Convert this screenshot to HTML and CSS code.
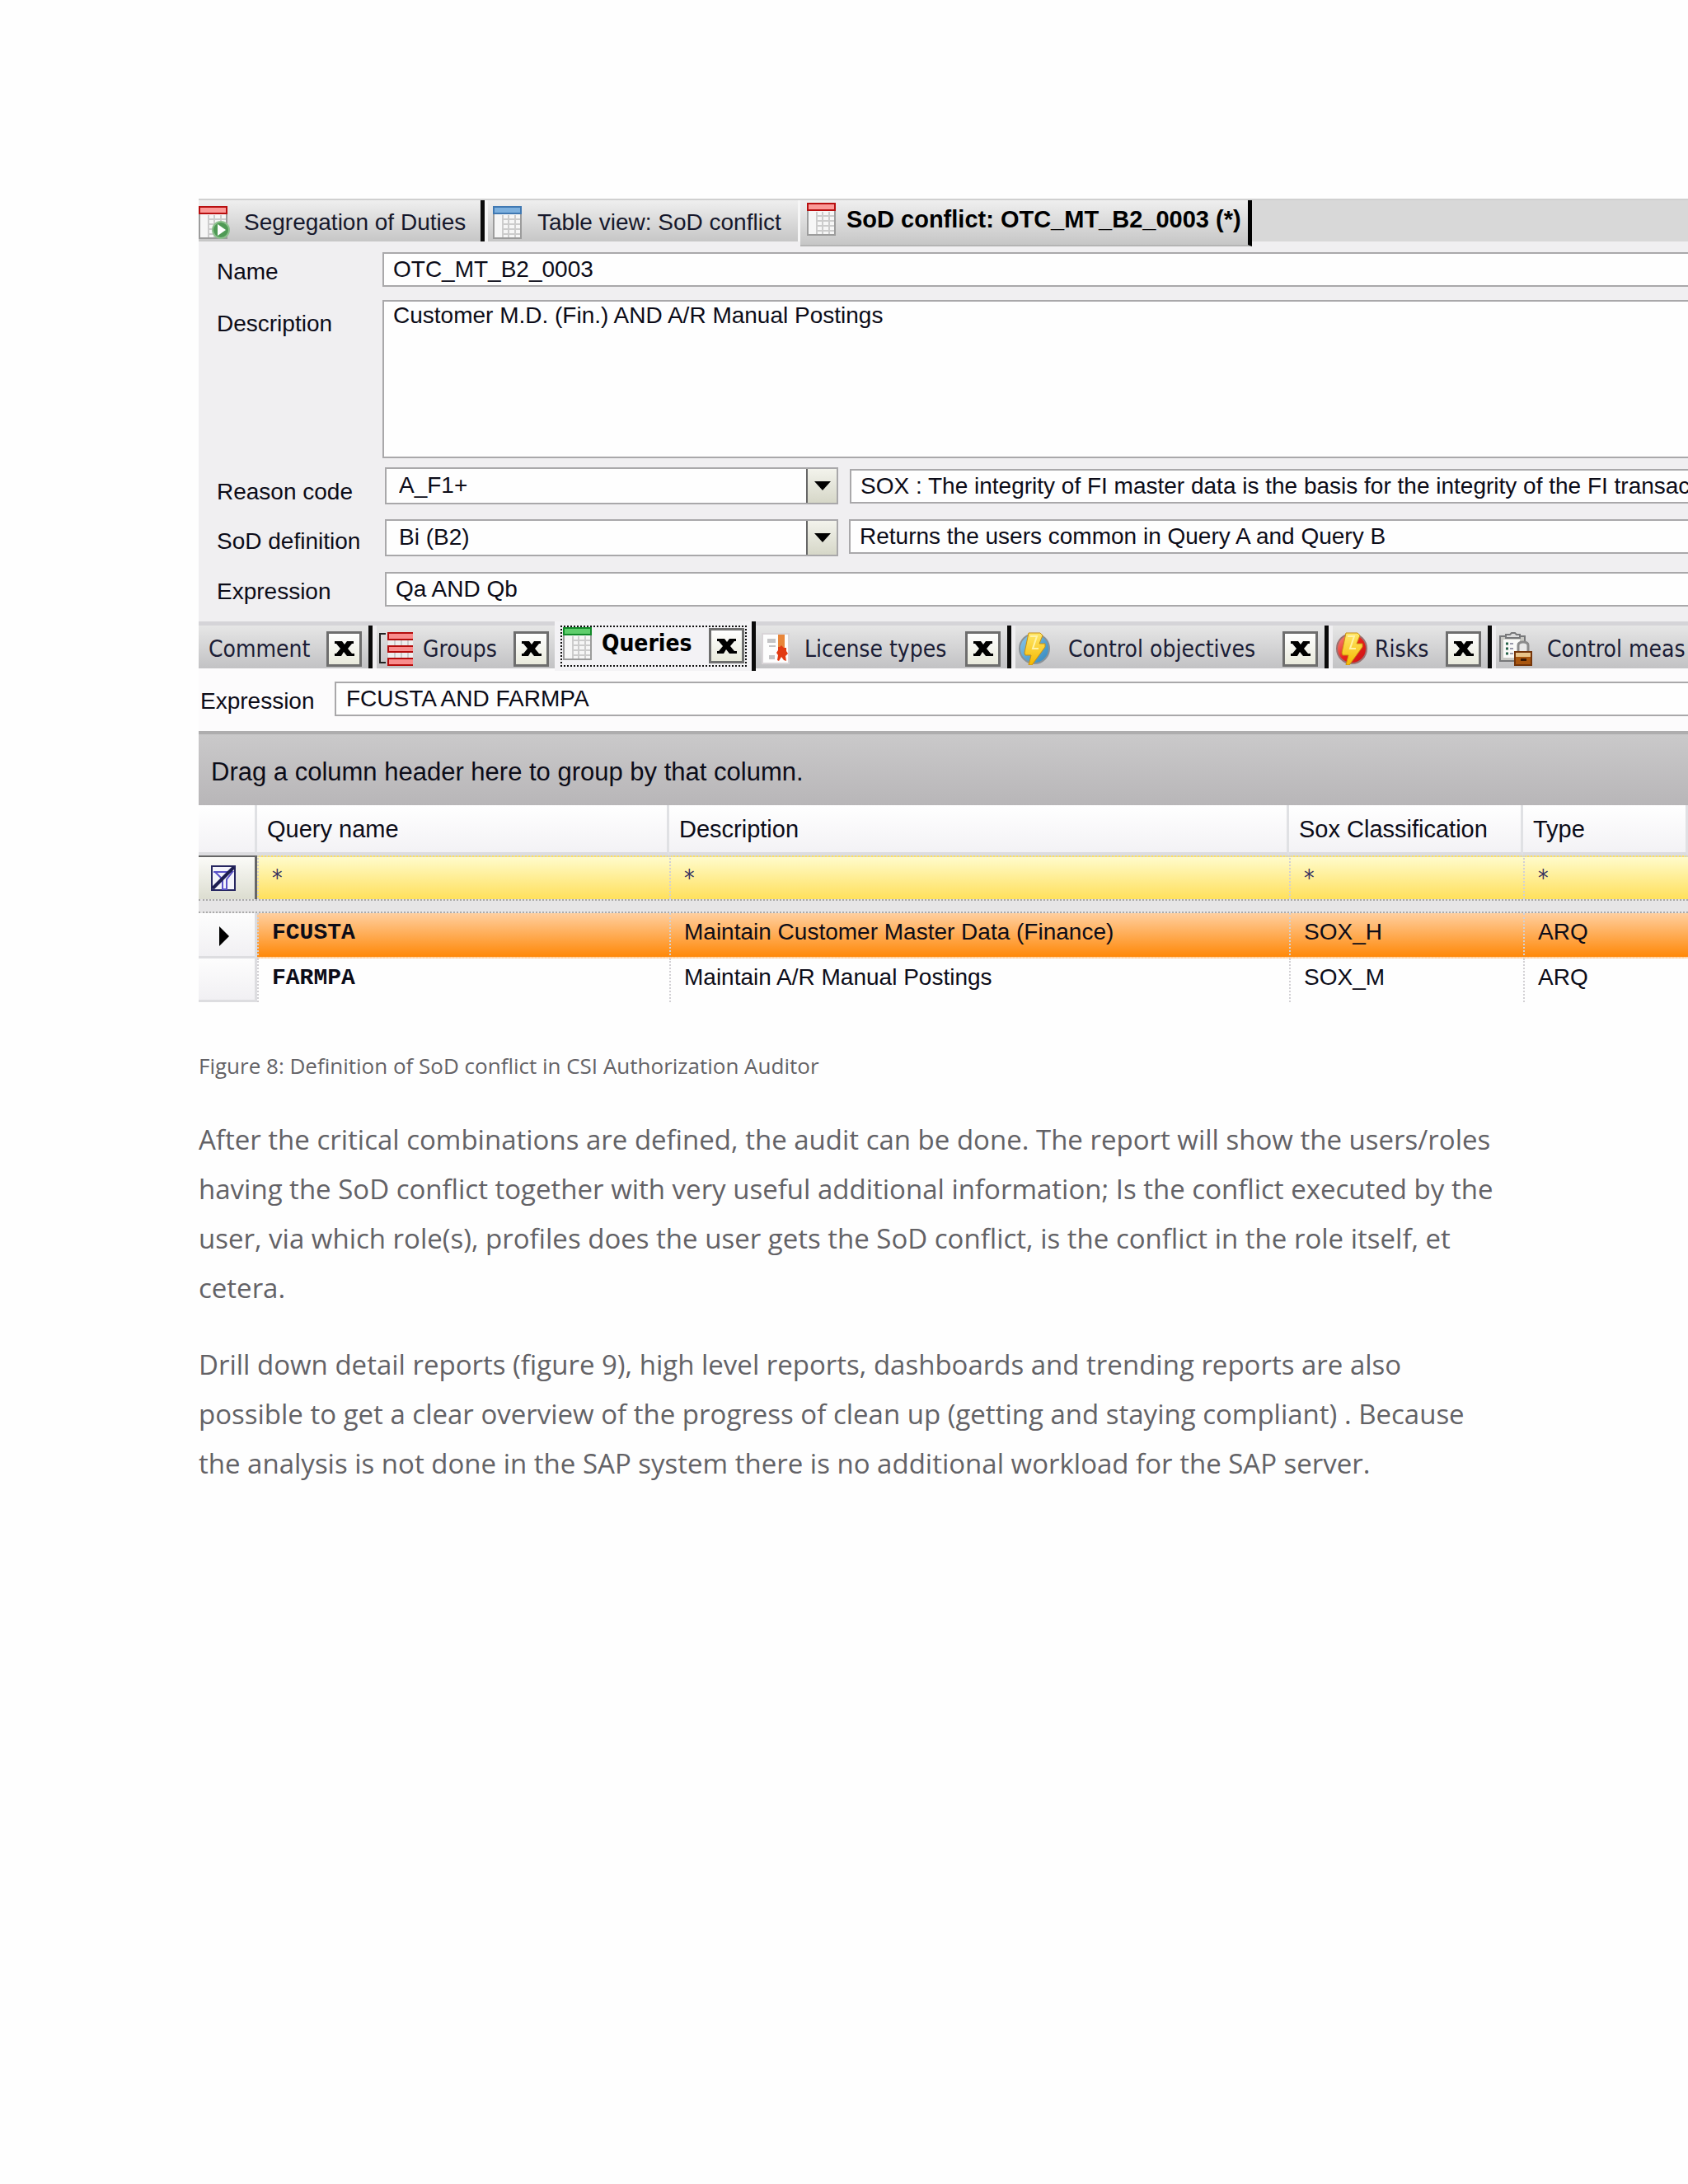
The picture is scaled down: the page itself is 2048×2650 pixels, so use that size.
FILE: index.html
```html
<!DOCTYPE html>
<html lang="en">
<head>
<meta charset="utf-8">
<title>SoD conflict definition</title>
<link rel="stylesheet" href="styles.css">
</head>
<body>
<svg class="defs" aria-hidden="true">
  <defs>
    <linearGradient id="globe" x1="0" y1="0" x2="1" y2="1"><stop offset="0" stop-color="#8cc8ea"/><stop offset="1" stop-color="#2f86bd"/></linearGradient>
    <linearGradient id="danger" x1="0" y1="0" x2="1" y2="1"><stop offset="0" stop-color="#f79a8c"/><stop offset=".5" stop-color="#e8231c"/><stop offset="1" stop-color="#c90f14"/></linearGradient>
    <linearGradient id="bolt" x1="0" y1="0" x2="0" y2="1"><stop offset="0" stop-color="#ffe86a"/><stop offset="1" stop-color="#f5b800"/></linearGradient>
    <symbol id="grid" viewBox="0 0 35 40">
      <rect x="1" y="1" width="33" height="38" fill="#f6f6f6" stroke="#9c9c9c" stroke-width="2"/>
      <path d="M12 16h21M12 22h21M12 28h21M12 34h21M12 11v27M19 11v27M27 11v27" stroke="#cccccc" stroke-width="2" fill="none"/>
      <rect x="1" y="1" width="33" height="8" fill="var(--lite)" stroke="var(--dark)" stroke-width="2"/>
    </symbol>
    <symbol id="lightning" viewBox="0 0 40 40">
      <path d="M13 1h14l3 3-4 10h7v4L17 40h-4l3-12h-7l-1-3z" fill="url(#bolt)" stroke="#c98f10"/>
      <path d="M15 5h8l-5 15h7" fill="none" stroke="#fff3a8" stroke-width="2"/>
    </symbol>
  </defs>
</svg>

<main class="document">
  <figure class="figure">
    <div class="app">
      <nav class="window-tabs" aria-label="Open windows">
        <button class="window-tab window-tab--duties" type="button">
          <svg class="icon red" width="38" height="41" viewBox="0 0 38 41"><use href="#grid" width="35" height="40"/><circle cx="27" cy="29" r="10" fill="#4f9a55" stroke="#8cc08c" stroke-width="2"/><path d="M23 22l10 7-10 7z" fill="#fff"/></svg>
          <span>Segregation of Duties</span>
        </button>
        <button class="window-tab window-tab--table" type="button">
          <svg class="icon blue" width="35" height="40"><use href="#grid"/></svg>
          <span>Table view: SoD conflict</span>
        </button>
        <button class="window-tab window-tab--active" type="button">
          <svg class="icon red" width="35" height="40"><use href="#grid"/></svg>
          <span>SoD conflict: OTC_MT_B2_0003 (*)</span>
        </button>
      </nav>

      <form class="form">
        <div class="row">
          <label for="name">Name</label>
          <input id="name" class="field" type="text" value="OTC_MT_B2_0003">
        </div>
        <div class="row row--memo">
          <label for="description">Description</label>
          <textarea id="description" class="field">Customer M.D. (Fin.) AND A/R Manual Postings</textarea>
        </div>
        <div class="row row--pair row--reason">
          <label for="reason">Reason code</label>
          <div class="combo">
            <select id="reason"><option>A_F1+</option></select>
            <span class="combo-arrow"><svg width="20" height="11" viewBox="0 0 20 11"><path d="M0 0h20L10 11z"/></svg></span>
          </div>
          <input class="field" type="text" aria-label="Reason text" value="SOX : The integrity of FI master data is the basis for the integrity of the FI transac">
        </div>
        <div class="row row--pair">
          <label for="definition">SoD definition</label>
          <div class="combo">
            <select id="definition"><option>Bi (B2)</option></select>
            <span class="combo-arrow"><svg width="20" height="11" viewBox="0 0 20 11"><path d="M0 0h20L10 11z"/></svg></span>
          </div>
          <input class="field" type="text" aria-label="Definition text" value="Returns the users common in Query A and Query B">
        </div>
        <div class="row row--formula">
          <label for="expression">Expression</label>
          <input id="expression" class="field" type="text" value="Qa AND Qb">
        </div>
      </form>

      <nav class="detail-tabs" aria-label="Conflict details">
        <div class="detail-tab detail-tab--comment">
          <button class="detail-label" type="button">Comment</button>
          <button class="close" type="button" aria-label="Close Comment"><svg width="24" height="18" viewBox="0 0 24 18"><path d="M0 0h9l3 4 3-4h8v3h-2l-5 6 5 6h3v3h-9l-4-5-3 5H0v-3h2l5-6-5-6H0z"/></svg></button>
        </div>
        <div class="detail-tab detail-tab--groups">
          <button class="detail-label" type="button">
            <svg class="icon" width="42" height="41" viewBox="0 0 42 41"><path d="M9 2H2v35h7" fill="none" stroke="#222" stroke-width="2"/><path d="M12 8h30v26H12z" fill="#eee"/><path d="M20 8v26M28 8v26M36 8v26" stroke="#ccc" stroke-width="2"/><g fill="#f98d8d" stroke="#b40d0d" stroke-width="2"><path d="M42 1H12v8h30M42 17H12v7h30M42 32H12v8h30"/></g></svg>
            Groups
          </button>
          <button class="close" type="button" aria-label="Close Groups"><svg width="24" height="18" viewBox="0 0 24 18"><path d="M0 0h9l3 4 3-4h8v3h-2l-5 6 5 6h3v3h-9l-4-5-3 5H0v-3h2l5-6-5-6H0z"/></svg></button>
        </div>
        <div class="detail-tab detail-tab--queries">
          <div class="focus">
            <button class="detail-label" type="button">
              <svg class="icon green" width="35" height="40"><use href="#grid"/></svg>
              Queries
            </button>
            <button class="close" type="button" aria-label="Close Queries"><svg width="24" height="18" viewBox="0 0 24 18"><path d="M0 0h9l3 4 3-4h8v3h-2l-5 6 5 6h3v3h-9l-4-5-3 5H0v-3h2l5-6-5-6H0z"/></svg></button>
          </div>
        </div>
        <div class="detail-tab detail-tab--license">
          <button class="detail-label" type="button">
            <svg class="icon" width="36" height="40" viewBox="0 0 36 40"><path d="M1 1h34v38H1z" fill="#d9d5d8"/><path d="M3 3h30v34H3z" fill="#fdfdfd"/><path d="M8 8h10v5H8zM10 16h8v2h-8zM10 28h7v5h-7z" fill="#c4c4c6"/><path d="M21 3h8v17h-8z" fill="#e8863a"/><path d="M25 16l3 3h3v4l2 3-3 3 1 6-3-1-3-4-3 5-2-1 1-6-2-3 2-3v-4h2z" fill="#e23a12"/></svg>
            License types
          </button>
          <button class="close" type="button" aria-label="Close License types"><svg width="24" height="18" viewBox="0 0 24 18"><path d="M0 0h9l3 4 3-4h8v3h-2l-5 6 5 6h3v3h-9l-4-5-3 5H0v-3h2l5-6-5-6H0z"/></svg></button>
        </div>
        <div class="detail-tab detail-tab--objectives">
          <button class="detail-label" type="button">
            <svg class="icon" width="40" height="40" viewBox="0 0 40 40"><circle cx="20" cy="20" r="18" fill="url(#globe)" stroke="#8a9298" stroke-width="2"/><use href="#lightning"/></svg>
            Control objectives
          </button>
          <button class="close" type="button" aria-label="Close Control objectives"><svg width="24" height="18" viewBox="0 0 24 18"><path d="M0 0h9l3 4 3-4h8v3h-2l-5 6 5 6h3v3h-9l-4-5-3 5H0v-3h2l5-6-5-6H0z"/></svg></button>
        </div>
        <div class="detail-tab detail-tab--risks">
          <button class="detail-label" type="button">
            <svg class="icon" width="40" height="40" viewBox="0 0 40 40"><circle cx="20" cy="20" r="18" fill="url(#danger)" stroke="#9a7070" stroke-width="2"/><use href="#lightning"/></svg>
            Risks
          </button>
          <button class="close" type="button" aria-label="Close Risks"><svg width="24" height="18" viewBox="0 0 24 18"><path d="M0 0h9l3 4 3-4h8v3h-2l-5 6 5 6h3v3h-9l-4-5-3 5H0v-3h2l5-6-5-6H0z"/></svg></button>
        </div>
        <div class="detail-tab detail-tab--measures">
          <button class="detail-label" type="button">
            <svg class="icon" width="41" height="41" viewBox="0 0 41 41"><path d="M2 5h30v30H2z" fill="#c9c9c4" stroke="#77787a" stroke-width="2"/><path d="M6 9h20v22H6z" fill="#fafaf8"/><path d="M9 7V3h5l2-2h4l2 2h4v4z" fill="#ddd" stroke="#77787a" stroke-width="2"/><path d="M9 14h3M9 20h3M9 26h3" stroke="#28654a" stroke-width="3"/><path d="M14 14h4M14 20h4M14 26h4" stroke="#99a" stroke-width="2"/><path d="M24 24v-8q0-4 6-4t6 4v8" fill="#e8e8e8" stroke="#8b8b8b" stroke-width="3"/><path d="M20 24h20v16H20z" fill="#a9560f" stroke="#74350a" stroke-width="2"/><path d="M21 25h18v5H21z" fill="#e9c48a"/><path d="M27 32h7v3h-7z" fill="#3b1a05"/></svg>
            Control meas
          </button>
        </div>
      </nav>

      <div class="query-bar">
        <label for="query">Expression</label>
        <input id="query" class="field" type="text" value="FCUSTA AND FARMPA">
      </div>

      <div class="group-bar">Drag a column header here to group by that column.</div>

      <table class="queries">
        <colgroup><col class="c-mark"><col class="c-name"><col class="c-desc"><col class="c-sox"><col></colgroup>
        <thead>
          <tr class="head"><th></th><th>Query name</th><th>Description</th><th>Sox Classification</th><th>Type</th></tr>
        </thead>
        <tbody>
          <tr class="filter">
            <td><button class="filter-button" type="button" aria-label="Clear filter"><svg width="30" height="31" viewBox="0 0 30 31"><path d="M1 1h28v29H1z" fill="#f4f4fb" stroke="#262660" stroke-width="2"/><path d="M3 8h23l-7 9v12h-5V17L5 8" fill="none" stroke="#5b52c8" stroke-width="2"/><path d="M2 28L28 2" stroke="#1e1e52" stroke-width="4"/></svg></button></td>
            <td>*</td><td>*</td><td>*</td><td>*</td>
          </tr>
          <tr class="gap"><td colspan="5"></td></tr>
          <tr class="current"><td><svg width="12" height="24" viewBox="0 0 12 24"><path d="M0 0l12 12L0 24z"/></svg></td><td class="code">FCUSTA</td><td>Maintain Customer Master Data (Finance)</td><td>SOX_H</td><td>ARQ</td></tr>
          <tr class="plain"><td></td><td class="code">FARMPA</td><td>Maintain A/R Manual Postings</td><td>SOX_M</td><td>ARQ</td></tr>
        </tbody>
      </table>
    </div>
    <figcaption>Figure 8: Definition of SoD conflict in CSI Authorization Auditor</figcaption>
  </figure>

  <p>After the critical combinations are defined, the audit can be done. The report will show the users/roles having the SoD conflict together with very useful additional information; Is the conflict executed by the user, via which role(s), profiles does the user gets the SoD conflict, is the conflict in the role itself, et cetera.</p>
  <p>Drill down detail reports (figure 9), high level reports, dashboards and trending reports are also possible to get a clear overview of the progress of clean up (getting and staying compliant) . Because the analysis is not done in the SAP system there is no additional workload for the SAP server.</p>
</main>
</body>
</html>
```
FILE: styles.css
```css
* { box-sizing: border-box; }

body {
  margin: 0;
  background: #fefefe;
  color: #636266;
  font-family: "Open Sans", "Noto Sans", sans-serif;
}

.defs { position: absolute; width: 0; height: 0; }

.document { padding: 241px 0 120px 241px; overflow: hidden; }
.document p {
  margin: 0 230px 33px 0;
  font-size: 33px;
  line-height: 60px;
}

.figure { margin: 0 0 41px; }
figcaption { margin-top: 58px; font-size: 26px; line-height: 38px; }

.app {
  background: #f0eff1;
  color: #0c0c18;
  font-family: "Liberation Sans", Arial, sans-serif;
  font-size: 28px;
}
.app button, .app input, .app select, .app textarea {
  margin: 0;
  border: 0;
  border-radius: 0;
  background: none;
  color: inherit;
  font: inherit;
}
.icon { flex: none; }
.red { --lite: #fb9a98; --dark: #b80f10; }
.blue { --lite: #7db0de; --dark: #3f78b2; }
.green { --lite: #5fce6c; --dark: #128a2a; }

/* window tabs */
.window-tabs {
  display: flex;
  height: 52px;
  align-items: flex-start;
  background: #d8d8d8;
  border-top: 2px solid #d0d0d0;
}
.app .window-tab {
  display: flex;
  flex: none;
  height: 50px;
  align-items: center;
  gap: 19px;
  padding: 4px 0 0;
  background: linear-gradient(#efefef, #c6c6c6);
  white-space: nowrap;
  color: #16182c;
}
.app .window-tab--duties { width: 351px; gap: 17px; border-right: 4px solid #f4f4f4; box-shadow: inset -5px 0 #0a0a0a; }
.app .window-tab--table { width: 379px; padding-left: 6px; border-right: 3px solid #f6f6f6; }
.app .window-tab--active {
  width: 548px;
  height: 56px;
  gap: 13px;
  padding: 0 0 8px 8px;
  border-right: 5px solid #000;
  border-bottom: 2px solid #b4b4b4;
  color: #000;
  font-size: 29px;
  font-weight: bold;
}

/* conflict form */
.form { padding: 13px 0 18px; }
.row { display: grid; grid-template-columns: 223px 1fr; align-items: start; margin-bottom: 16px; }
.row label { padding: 9px 0 0 22px; line-height: 30px; }
.row--memo { margin-bottom: 11px; }
.row--memo label { padding-top: 14px; }
.row--pair { grid-template-columns: 226px 550px 1fr; margin-bottom: 19px; }
.row--pair label { padding-top: 12px; }
.row--pair .field { margin: 0 0 0 13px; }
.row--reason { margin-bottom: 18px; }
.row--reason label { padding-top: 15px; }
.row--reason .field { margin: 2px 0 0 14px; }
.row--formula { grid-template-columns: 226px 1fr; margin: 0; }
.app .field {
  min-width: 0;
  height: 42px;
  padding: 0 0 0 11px;
  border: 2px solid #a9a8aa;
  border-right: 0;
  background: #fefefe;
  color: #0c0c18;
}
.app textarea.field { display: block; height: 192px; line-height: 34px; resize: none; }
.combo { display: flex; height: 45px; border: 2px solid #a9a8aa; background: #fefefe; }
.app .combo select { flex: 1; padding: 0 0 3px 15px; appearance: none; }
.combo-arrow {
  display: flex;
  width: 37px;
  align-items: center;
  justify-content: center;
  border-left: 2px solid #666;
  background: linear-gradient(#f3f3ec, #d6d7c8);
  pointer-events: none;
}

/* detail tabs */
.detail-tabs {
  display: flex;
  height: 57px;
  border-top: 5px solid #d5d4d8;
  font-family: "DejaVu Sans Condensed", "DejaVu Sans", sans-serif;
  font-size: 28px;
}
.detail-tab {
  display: flex;
  flex: none;
  height: 52px;
  align-items: center;
  justify-content: space-between;
  padding-top: 4px;
  padding-right: 13px;
  background: linear-gradient(#e6e6e6, #c2c2c4);
  box-shadow: inset -5px 0 #0a0a0a;
  margin-right: 5px;
}
.app .detail-label {
  display: flex;
  align-items: center;
  gap: 12px;
  padding: 0;
  white-space: nowrap;
  color: #1b1d36;
}
.app .close {
  display: flex;
  width: 43px;
  height: 43px;
  align-items: center;
  justify-content: center;
  padding: 0;
  border: 3px solid #6e6e6e;
  background: linear-gradient(#ffffff, #e9eadc);
  color: #000;
}
.detail-tab--comment { width: 211px; padding-left: 12px; }
.detail-tab--groups { width: 216px; margin: 0; padding: 4px 7px 0 2px; box-shadow: none; }
.detail-tab--queries { width: 244px; height: 60px; margin: -5px 0 0; padding: 0 11px 1px 7px; background: #f3f2f5; }
.focus {
  display: flex;
  width: 100%;
  height: 50px;
  align-items: center;
  justify-content: space-between;
  padding: 0 1px;
  border: 2px dotted #111;
}
.app .focus .detail-label { padding-bottom: 6px; color: #000; font-weight: bold; }
.detail-tab--license { width: 310px; padding-left: 6px; }
.detail-tab--license .detail-label { gap: 17px; }
.detail-tab--objectives { width: 380px; padding-left: 3px; }
.detail-tab--objectives .detail-label { gap: 21px; }
.detail-tab--risks { width: 193px; padding-left: 3px; }
.detail-tab--risks .detail-label { gap: 8px; }
.detail-tab--measures { flex: 1 0 0; min-width: 0; margin: 0; padding-left: 3px; padding-right: 0; box-shadow: none; }
.detail-tab--measures .detail-label { gap: 18px; }

/* query list */
.query-bar {
  display: grid;
  grid-template-columns: 165px 1fr;
  align-items: start;
  padding: 16px 0 18px;
  background: #fcfbfc;
}
.query-bar label { padding: 9px 0 0 2px; line-height: 30px; }
.query-bar .field { padding-left: 12px; }
.group-bar {
  height: 90px;
  padding: 6px 15px 0;
  border-top: 4px solid #aeadae;
  background: linear-gradient(#cac9ca, #b8b6b8);
  font-size: 31px;
  line-height: 80px;
}
.queries {
  width: 100%;
  table-layout: fixed;
  border-spacing: 0;
  background: #fefefe;
}
.c-mark { width: 71px; }
.c-name { width: 500px; }
.c-desc { width: 752px; }
.c-sox { width: 284px; }
.queries th {
  height: 61px;
  padding: 2px 0 0 12px;
  border-right: 3px solid #e0e1e4;
  border-bottom: 4px solid #dddde0;
  background: linear-gradient(#ffffff, #f3f2f5);
  font-size: 29px;
  font-weight: normal;
  text-align: left;
}
.queries td { padding: 0 0 7px 16px; border-left: 2px dotted #d2d0d4; white-space: nowrap; }
.queries td:first-child { padding: 0; border-left: 0; text-align: center; }
.queries .filter td { height: 53px; padding-bottom: 0; background: linear-gradient(#fffbcb, #ffe05c); border-top: 2px dotted #d8d6c8; color: #3a3560; font-family: "DejaVu Sans Condensed", "DejaVu Sans", sans-serif; }
.queries .filter td:first-child { background: #f0f0ec; border-top: 0; }
.app .filter-button {
  display: flex;
  width: 100%;
  height: 53px;
  align-items: center;
  padding: 0 0 0 15px;
  border-top: 2px solid #666;
  border-right: 3px solid #666;
  background: linear-gradient(#fbfbf8, #dcddd0);
}
.gap td { height: 17px; border-top: 2px dotted #aaa; border-bottom: 2px dotted #aaa; background: #e6e5e6; }
.current td { height: 55px; background: linear-gradient(#ffcf9f, #ff8808); border-bottom: 2px dotted #ffd9b0; }
.plain td { height: 53px; }
.current td:first-child, .plain td:first-child {
  border-right: 3px solid #dddde0;
  border-bottom: 3px solid #dddde0;
  background: linear-gradient(#fdfdfd, #f1f0f3);
}
.queries .current td:first-child { padding-right: 6px; }
.queries .code { font-family: "Liberation Mono", "Courier New", monospace; font-weight: bold; }
.queries svg { vertical-align: middle; }
```
